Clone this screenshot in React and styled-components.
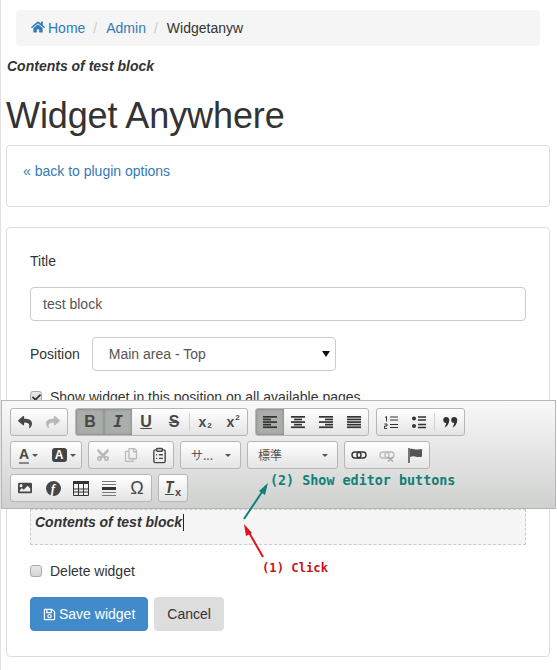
import React from 'react';
import styled, { createGlobalStyle } from 'styled-components';
import {
  FaCheck,
  FaCut,
  FaHome,
  FaImage,
  FaRegCopy,
  FaRegSave,
  FaReply,
  FaShare,
} from 'react-icons/fa';
import { LuClipboardList } from 'react-icons/lu';

const GlobalStyle = createGlobalStyle`
  html, body {
    margin: 0;
    padding: 0;
    background: #fff;
  }
  body {
    font-family: "Liberation Sans", Arial, sans-serif;
    font-size: 14px;
    line-height: 20px;
    color: #333;
  }
  * {
    box-sizing: border-box;
  }
`;

const Page = styled.div`
  position: relative;
  width: 557px;
  height: 670px;
  padding: 10px 7px 0 5px;
  border-left: 1px solid #e2e2e2;
  overflow: hidden;
`;

const Breadcrumb = styled.ol`
  display: flex;
  height: 36px;
  margin: 0 10px;
  padding: 8px 15px;
  list-style: none;
  background: #f5f5f5;
  border-radius: 4px;

  li + li::before {
    content: '/';
    padding: 0 9px 0 8px;
    color: #ccc;
  }
`;

const Crumb = styled.li`
  color: ${(p) => (p.$current ? '#333' : '#337ab7')};
  svg {
    font-size: 14px;
    vertical-align: -1px;
    margin-right: 3px;
  }
`;

const Contents = styled.p`
  margin: 10px 0 0 1px;
  font-weight: bold;
  font-style: italic;
  color: #333;
`;

const Title = styled.h1`
  margin: 20px 0 9px;
  font-size: 36px;
  line-height: 40px;
  font-weight: normal;
  letter-spacing: -0.1px;
`;

const Panel = styled.section`
  border: 1px solid #ddd;
  border-radius: 4px;
  margin-bottom: 20px;
  padding: ${(p) => (p.$form ? '23px' : '15px 16px')};
  min-height: ${(p) => (p.$form ? '430px' : '62px')};
`;

const BackLink = styled.a`
  color: #337ab7;
`;

const Field = styled.div`
  margin-bottom: 15px;
`;

const Label = styled.label`
  display: block;
  margin: 0 0 16px;
`;

const TextInput = styled.input`
  display: block;
  width: 100%;
  height: 34px;
  padding: 6px 12px;
  border: 1px solid #ccc;
  border-radius: 4px;
  font: inherit;
  color: #555;
`;

const InlineField = styled.div`
  display: flex;
  align-items: center;
  gap: 12px;
  margin-top: 16px;
`;

const SelectWrap = styled.div`
  position: relative;
  width: 244px;

  &::after {
    content: '';
    position: absolute;
    top: 14px;
    right: 6px;
    border: 4px solid transparent;
    border-top: 6px solid #111;
    border-bottom: 0;
  }
`;

const Select = styled.select`
  display: block;
  width: 100%;
  height: 34px;
  padding: 6px 16px;
  border: 1px solid #ccc;
  border-radius: 4px;
  background: #fff;
  font: inherit;
  color: #555;
  appearance: none;
`;

const CheckRow = styled.div`
  display: flex;
  align-items: center;
  gap: 8px;
  margin-top: ${(p) => p.$top}px;
`;

const CheckBox = styled.span`
  display: flex;
  align-items: center;
  justify-content: center;
  width: 12px;
  height: 12px;
  border: 1px solid #a9a9a9;
  border-radius: 3px;
  background: linear-gradient(#e9e9e9, #d4d4d4);
  color: #333;
  font-size: 9px;
`;

const Editable = styled.div`
  height: 36px;
  margin-top: 102px;
  padding: 2px 4px;
  border: 1px dashed #ccc;
  background: #f5f5f5;
  font-weight: bold;
  font-style: italic;
`;

const Caret = styled.span`
  display: inline-block;
  width: 1px;
  height: 17px;
  margin-left: 1px;
  background: #222;
  vertical-align: -4px;
`;

const Actions = styled.div`
  display: flex;
  gap: 6px;
  margin-top: 16px;
`;

const Button = styled.button`
  display: flex;
  align-items: center;
  gap: 3px;
  height: 34px;
  padding: 0 12px;
  border: 1px solid ${(p) => (p.$primary ? '#3f87c5' : '#ddd')};
  border-radius: 4px;
  background: ${(p) => (p.$primary ? '#428bca' : '#ddd')};
  color: ${(p) => (p.$primary ? '#fff' : '#333')};
  font: inherit;

  svg {
    font-size: 13px;
  }
`;

const Toolbar = styled.div`
  position: absolute;
  top: 400px;
  left: 0;
  display: flex;
  flex-direction: column;
  gap: 5px;
  width: 555px;
  height: 109px;
  padding: 7px 8px;
  border: 1px solid #b6b6b6;
  background: linear-gradient(#f8f8f8, #cfd1cf);
`;

const ToolRow = styled.div`
  display: flex;
  gap: ${(p) => p.$gap || 6}px;
`;

const Group = styled.div`
  display: flex;
  height: 28px;
  border: 1px solid #b6b6b6;
  border-radius: 3px;
  background: linear-gradient(#fff, #e4e4e4);
  overflow: hidden;
`;

const Tool = styled.span`
  display: flex;
  align-items: center;
  justify-content: center;
  gap: 3px;
  width: ${(p) => p.$width || 28}px;
  height: 100%;
  font-size: 14px;
  font-weight: bold;
  color: ${(p) => (p.$muted ? '#b9b9b9' : '#474747')};
  background: ${(p) => (p.$on ? '#aaaeaa' : 'transparent')};
  box-shadow: ${(p) => (p.$on ? 'inset 0 0 3px #777' : 'none')};
`;

const Separator = styled.span`
  width: 1px;
  height: 18px;
  margin: 4px 1px 0 1px;
  background: #d0d0d0;
`;

const Letter = styled.span`
  font-family: ${(p) => (p.$italic ? '"DejaVu Sans Mono", monospace' : '"Liberation Sans", sans-serif')};
  font-size: ${(p) => p.$size || 16}px;
  font-style: ${(p) => (p.$italic ? 'italic' : 'normal')};
  font-weight: ${(p) => (p.$light ? 'normal' : 'bold')};
  text-decoration: ${(p) => p.$line || 'none'};
  line-height: 1;
`;

const Script = styled.span`
  font-size: ${(p) => p.$size || 8}px;
  line-height: 1;
  margin-left: 1px;
  transform: translateY(${(p) => (p.$up ? -4 : 4)}px);
`;

const ScriptTool = styled(Tool)`
  gap: 0;
`;

const Caretdown = styled.span`
  width: 0;
  height: 0;
  border: 3px solid transparent;
  border-top-color: #555;
  border-bottom: 0;
`;

const ColorA = styled(Letter)`
  padding-bottom: 1px;
  font-size: 14px;
  border-bottom: 2px solid #888;
`;

const FillA = styled(Letter)`
  width: 15px;
  height: 14px;
  border-radius: 3px;
  background: #444;
  color: #fff;
  font-size: 12px;
  line-height: 14px;
  text-align: center;
`;

const FlashIcon = styled.span`
  width: 15px;
  height: 15px;
  border-radius: 50%;
  background: #474747;
  color: #fff;
  font-family: "Liberation Serif", serif;
  font-size: 13px;
  font-style: italic;
  line-height: 15px;
  text-align: center;
`;

const Combo = styled.div`
  display: flex;
  align-items: center;
  justify-content: space-between;
  width: ${(p) => p.$width}px;
  height: 28px;
  padding: 0 9px 0 10px;
  border: 1px solid #b6b6b6;
  border-radius: 3px;
  background: linear-gradient(#fff, #e4e4e4);
  font-family: "Noto Sans CJK JP", "Liberation Sans", sans-serif;
  font-size: 12px;
  color: #555;
`;

const Note = styled.span`
  position: absolute;
  top: ${(p) => p.$top}px;
  left: ${(p) => p.$left}px;
  font-family: "DejaVu Sans Mono", monospace;
  font-size: ${(p) => p.$size}px;
  font-weight: bold;
  line-height: 16px;
  color: ${(p) => p.$color};
  white-space: nowrap;
`;

const Arrows = styled.svg`
  position: absolute;
  top: 470px;
  left: 229px;
`;

const AlignIcon = ({ mode }) => {
  const short = mode === 'justify' ? 14 : 8;
  const widths = [14, short, 14, short, 14];
  const place = (w) => {
    if (mode === 'center') return (14 - w) / 2;
    if (mode === 'right') return 14 - w;
    return 0;
  };
  return (
    <svg width="14" height="13" viewBox="0 0 14 13">
      {widths.map((w, i) => (
        <rect key={i} x={place(w)} y={i * 2.6} width={w} height="1.7" fill="#333" />
      ))}
    </svg>
  );
};

const TableIcon = () => (
  <svg width="16" height="15" viewBox="0 0 16 15">
    <rect x="0" y="0" width="16" height="3" fill="#333" />
    <path d="M.5 3v11.5h15V3M.5 8h15M.5 11h15M5.5 3v11.5M10.5 3v11.5" fill="none" stroke="#333" />
  </svg>
);

const RuleIcon = () => (
  <svg width="14" height="15" viewBox="0 0 14 15">
    <path d="M0 .5h14M0 3.5h14M0 11.5h14M0 14.5h14" stroke="#777" />
    <rect x="0" y="6" width="14" height="3" fill="#333" />
  </svg>
);

const LinkIcon = ({ off }) => (
  <svg width="16" height="14" viewBox="0 0 16 14">
    <g fill="none" stroke={off ? '#bbb' : '#333'} strokeWidth="1.4">
      <rect x="1" y="4" width="9" height="6" rx="3" />
      <rect x="6" y="4" width="9" height="6" rx="3" />
    </g>
    {off && <path d="M9 9l5 4.5M14 9l-5 4.5" stroke="#aaa" strokeWidth="1.5" />}
  </svg>
);

const NumberedIcon = () => (
  <svg width="14" height="13" viewBox="0 0 14 13">
    <path d="M1 1.5l1.5-1v5M.5 8h2.5v2H.5v2.5H3" fill="none" stroke="#333" />
    <path d="M6 1h8M6 4h8M6 8.5h8M6 11.5h8" stroke="#333" strokeWidth="1.2" />
  </svg>
);

const BulletIcon = () => (
  <svg width="14" height="13" viewBox="0 0 14 13">
    <circle cx="2" cy="2.5" r="2" fill="#333" />
    <circle cx="2" cy="10" r="2" fill="#333" />
    <path d="M6 1h8M6 4h8M6 8.5h8M6 11.5h8" stroke="#333" strokeWidth="1.3" />
  </svg>
);

const QuoteIcon = () => (
  <svg width="15" height="11" viewBox="0 0 15 11">
    <circle cx="3.2" cy="3" r="3" fill="#333" />
    <circle cx="11.2" cy="3" r="3" fill="#333" />
    <path d="M6.2 3c0 3.5-2 6.5-4.7 7.500 1-1.500 1.600-3.500 1.700-5zM14.200 3c0 3.500-2 6.500-4.700 7.500 1-1.500 1.600-3.500 1.700-5z" fill="#333" />
  </svg>
);

const FlagIcon = () => (
  <svg width="14" height="15" viewBox="0 0 14 15">
    <path d="M1 0v15" stroke="#222" strokeWidth="1.2" />
    <path d="M2 1c3-1 5 1 8 .5L14 1v7.500c-2 1-5 .5-7 0-2-.5-3.500 0-5 .5z" fill="#555" />
  </svg>
);

const App = () => {
  return (
    <Page>
      <GlobalStyle />
      <Breadcrumb>
        <Crumb>
          <FaHome />
          Home
        </Crumb>
        <Crumb>Admin</Crumb>
        <Crumb $current>Widgetanyw</Crumb>
      </Breadcrumb>
      <Contents>Contents of test block</Contents>
      <Title>Widget Anywhere</Title>
      <Panel>
        <BackLink>« back to plugin options</BackLink>
      </Panel>
      <Panel $form>
        <Field>
          <Label>Title</Label>
          <TextInput defaultValue="test block" />
        </Field>
        <InlineField>
          <span>Position</span>
          <SelectWrap>
            <Select defaultValue="top">
              <option value="top">Main area - Top</option>
            </Select>
          </SelectWrap>
        </InlineField>
        <CheckRow $top={16}>
          <CheckBox>
            <FaCheck />
          </CheckBox>
          Show widget in this position on all available pages
        </CheckRow>
        <Editable>
          Contents of test block
          <Caret />
        </Editable>
        <CheckRow $top={16}>
          <CheckBox />
          Delete widget
        </CheckRow>
        <Actions>
          <Button $primary>
            <FaRegSave />
            Save widget
          </Button>
          <Button>Cancel</Button>
        </Actions>
      </Panel>

      <Toolbar>
        <ToolRow $gap={7}>
          <Group>
            <Tool><FaReply /></Tool>
            <Tool $muted><FaShare /></Tool>
          </Group>
          <Group>
            <Tool $on><Letter>B</Letter></Tool>
            <Tool $on><Letter $italic>I</Letter></Tool>
            <Tool><Letter $line="underline">U</Letter></Tool>
            <Tool><Letter $line="line-through">S</Letter></Tool>
            <Separator />
            <ScriptTool><Letter $size={14}>x</Letter><Script>2</Script></ScriptTool>
            <ScriptTool><Letter $size={14}>x</Letter><Script $up>2</Script></ScriptTool>
          </Group>
          <Group>
            <Tool $on><AlignIcon mode="left" /></Tool>
            <Tool><AlignIcon mode="center" /></Tool>
            <Tool><AlignIcon mode="right" /></Tool>
            <Tool><AlignIcon mode="justify" /></Tool>
          </Group>
          <Group>
            <Tool><NumberedIcon /></Tool>
            <Tool><BulletIcon /></Tool>
            <Separator />
            <Tool><QuoteIcon /></Tool>
          </Group>
        </ToolRow>
        <ToolRow>
          <Group>
            <Tool $width={35}><ColorA>A</ColorA><Caretdown /></Tool>
            <Tool $width={35}><FillA>A</FillA><Caretdown /></Tool>
          </Group>
          <Group>
            <Tool $muted><FaCut style={{ transform: 'rotate(-90deg)' }} /></Tool>
            <Tool $muted><FaRegCopy /></Tool>
            <Tool><LuClipboardList size={17} /></Tool>
          </Group>
          <Combo $width={61}>サ...<Caretdown /></Combo>
          <Combo $width={91}>標準<Caretdown /></Combo>
          <Group>
            <Tool><LinkIcon /></Tool>
            <Tool><LinkIcon off /></Tool>
            <Tool><FlagIcon /></Tool>
          </Group>
        </ToolRow>
        <ToolRow>
          <Group>
            <Tool><FaImage /></Tool>
            <Tool><FlashIcon>f</FlashIcon></Tool>
            <Tool><TableIcon /></Tool>
            <Tool><RuleIcon /></Tool>
            <Tool><Letter $size={18} $light>Ω</Letter></Tool>
          </Group>
          <Group>
            <ScriptTool>
              <Letter $italic $size={15} $line="underline">T</Letter>
              <Script $size={11}>x</Script>
            </ScriptTool>
          </Group>
        </ToolRow>
      </Toolbar>

      <Arrows width="60" height="90" viewBox="0 0 60 90">
        <path d="M14 49L36 16" stroke="#0f7f78" strokeWidth="2" />
        <path d="M38 13l-9 8 6 4z" fill="#0f7f78" />
        <path d="M33 87L17 59" stroke="#e0141c" strokeWidth="2" />
        <path d="M14 54l2 12 6-3z" fill="#e0141c" />
      </Arrows>
      <Note $top={473} $left={269} $size={13.4} $color="#0f7f78">(2) Show editor buttons</Note>
      <Note $top={560} $left={261} $size={12.2} $color="#c9101a">(1) Click</Note>
    </Page>
  );
};

export default App;
